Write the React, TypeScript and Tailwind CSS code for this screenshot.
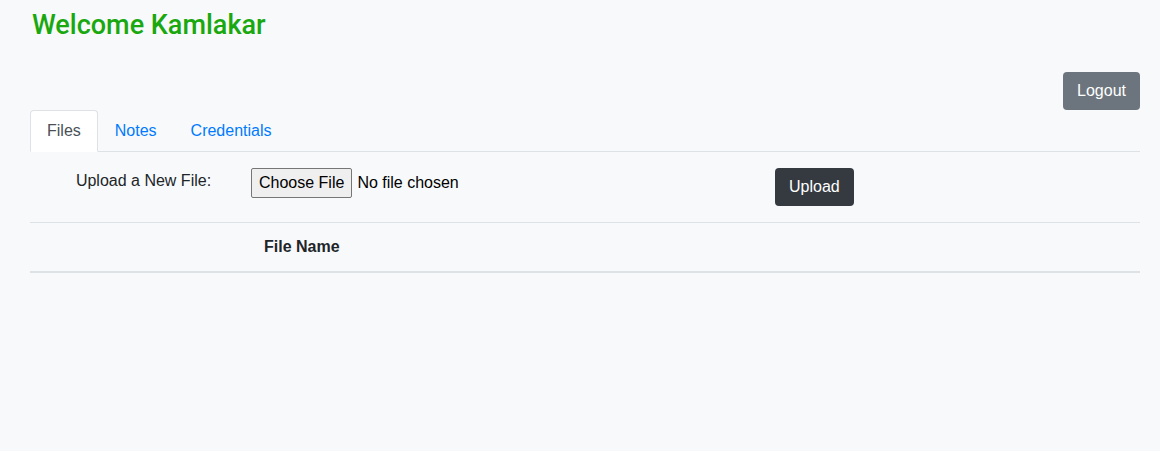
export default function App() {
  const tabs = ['Files', 'Notes', 'Credentials']
  const active = 'Files'

  return (
    <div
      className="min-h-[451px] bg-[#f8f9fa] pl-[30px] pr-[20px] text-[#212529]"
      style={{ fontFamily: '"Liberation Sans", Arial, sans-serif' }}
    >
      {/* Header */}
      <h1
        className="pt-[8px] pl-[2px] text-[27px] leading-[34px] font-medium text-[#19a80f]"
        style={{ fontFamily: 'Roboto, "Liberation Sans", Arial, sans-serif' }}
      >
        Welcome Kamlakar
      </h1>

      <div className="mt-[30px] flex justify-end">
        <button className="h-[38px] rounded-[4px] bg-[#6c757d] px-[14px] text-[16px] text-white">Logout</button>
      </div>

      {/* Tabs */}
      <div className="flex border-b border-[#dee2e6]">
        {tabs.map((t) => (
          <div
            key={t}
            className={
              t === active
                ? '-mb-px h-[42px] rounded-t-[4px] border border-[#dee2e6] border-b-white bg-white px-[16px] pt-[8px] text-[16px] leading-[24px] text-[#495057]'
                : 'h-[41px] border border-transparent px-[16px] pt-[8px] text-[16px] leading-[24px] text-[#007bff]'
            }
          >
            {t}
          </div>
        ))}
      </div>

      {/* Upload row */}
      <div className="flex items-start pt-[16px] pb-[16px]">
        <div className="w-[221px] pl-[6px] pt-[3px] text-center text-[16px] leading-[20px]">Upload a New File:</div>
        <div className="flex w-[524px] items-center">
          <span className="h-[30px] rounded-[2px] border border-[#767676] bg-[#efefef] px-[7px] text-[16px] leading-[28px] text-black">
            Choose File
          </span>
          <span className="ml-[5px] text-[16px] text-black">No file chosen</span>
        </div>
        <button className="h-[38px] rounded-[4px] bg-[#343a40] px-[14px] text-[16px] text-white">Upload</button>
      </div>

      {/* Table */}
      <table className="w-full border-collapse">
        <thead>
          <tr>
            <th className="w-[20%] border-t border-b-2 border-[#dee2e6] p-[12px] text-left"></th>
            <th className="border-t border-b-2 border-[#dee2e6] p-[12px] text-left text-[16px] leading-[24px] font-bold">
              File Name
            </th>
          </tr>
        </thead>
        <tbody></tbody>
      </table>
    </div>
  )
}
